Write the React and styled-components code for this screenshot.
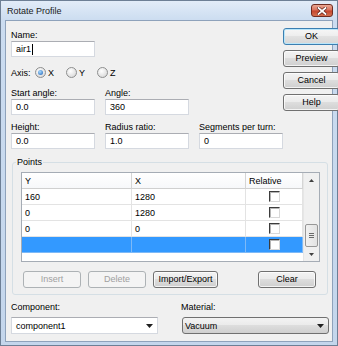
import React from "react";
import styled, { createGlobalStyle, css } from "styled-components";

const GlobalStyle = createGlobalStyle`
  html, body { margin: 0; padding: 0; background: #ffffff; }
  body {
    font-family: "Liberation Sans", Arial, sans-serif;
    font-size: 9px;
    color: #000;
  }
  * { box-sizing: border-box; }
`;

const Window = styled.div`
  width: 338px;
  height: 346px;
  border: 1px solid #6d7f95;
  background: linear-gradient(#e2ecf8, #cbdcf0 20px, #c4d6ec);
  padding: 0 4px 3px 4px;
  display: flex;
  flex-direction: column;
`;

const TitleBar = styled.div`
  height: 19px;
  display: flex;
  align-items: center;
  justify-content: space-between;
  padding-left: 2px;
`;

const Title = styled.div`
  font-size: 9px;
  color: #1a1a1a;
`;

const CloseButton = styled.div`
  width: 22px;
  height: 13px;
  border: 1px solid #6f2b20;
  border-radius: 3px;
  background: linear-gradient(#eaa894, #d8705a 48%, #c4432c 52%, #d4704f);
  display: flex;
  align-items: center;
  justify-content: center;
`;

const Client = styled.div`
  flex: 1;
  background: #f0f0f0;
  border: 1px solid #8ea2bb;
  padding: 7px 7px 0 5px;
  display: flex;
  flex-direction: column;
`;

const TopArea = styled.div`
  display: flex;
  align-items: flex-start;
`;

const FormColumn = styled.div`
  flex: 1;
  padding-top: 2px;
  display: flex;
  flex-direction: column;
`;

const ActionColumn = styled.div`
  width: 57px;
  display: flex;
  flex-direction: column;
  gap: 5px;
`;

const PushButton = styled.button`
  height: 17px;
  width: ${({ $w }) => $w || 57}px;
  padding: 0;
  font: inherit;
  font-size: 9px;
  line-height: 15px;
  border-radius: 3px;
  border: 1px solid #707070;
  color: #000;
  background: linear-gradient(#f3f3f3, #ebebeb 45%, #dddddd 50%, #cfcfcf);
  box-shadow: inset 0 0 0 1px rgba(255, 255, 255, 0.75);
  ${({ $default }) =>
    $default &&
    css`
      border-color: #3c7fb1;
      box-shadow: inset 0 0 0 1px #b9e6fa;
      background: linear-gradient(#f6f6f6, #eeeeee 45%, #e2e2e2 50%, #d6d6d6);
    `}
  ${({ disabled }) =>
    disabled &&
    css`
      border-color: #adb2b5;
      background: #f4f4f4;
      color: #a0a0a0;
      box-shadow: none;
    `}
`;

const FieldLabel = styled.div`
  height: 11px;
  line-height: 11px;
  white-space: nowrap;
`;

const TextBox = styled.div`
  width: ${({ $w }) => $w || 84}px;
  height: 16px;
  border: 1px solid #d5d9e0;
  border-top-color: #abadb3;
  background: #fff;
  padding-left: 4px;
  display: flex;
  align-items: center;
  white-space: nowrap;
`;

const Caret = styled.span`
  display: inline-block;
  width: 1px;
  height: 11px;
  background: #000;
  margin-left: 1px;
`;

const AxisRow = styled.div`
  margin-top: 8px;
  height: 15px;
  display: flex;
  align-items: center;
`;

const AxisLabel = styled.div`
  width: 24px;
`;

const RadioOption = styled.label`
  width: 31px;
  display: flex;
  align-items: center;
  gap: 2px;
`;

const RadioDot = styled.span`
  width: 11px;
  height: 11px;
  border-radius: 50%;
  border: 1px solid #8e8f8f;
  background: radial-gradient(circle at 40% 35%, #ffffff, #d8d8d8 85%);
  display: inline-flex;
  align-items: center;
  justify-content: center;
  &::after {
    content: "";
    width: 5px;
    height: 5px;
    border-radius: 50%;
    background: radial-gradient(circle at 40% 35%, #a8dcff, #1d5eb4);
    display: ${({ $checked }) => ($checked ? "block" : "none")};
  }
`;

const FieldGrid = styled.div`
  margin-top: 8px;
  display: grid;
  grid-template-columns: 84px 84px 84px;
  column-gap: 10px;
  row-gap: 7px;
`;

const Field = styled.div`
  display: flex;
  flex-direction: column;
`;

const PointsGroup = styled.fieldset`
  margin: 8px -3px 0 1px;
  padding: 4px 7px 6px 8px;
  border: 1px solid #d5dfe5;
  border-radius: 3px;
  min-width: 0;
`;

const GroupLegend = styled.legend`
  padding: 0 1px;
  margin-left: -5px;
  line-height: 11px;
`;

const DataGrid = styled.div`
  height: 90px;
  border: 1px solid #a5acb5;
  background: #fff;
  display: flex;
`;

const TableArea = styled.div`
  width: 281px;
  display: flex;
  flex-direction: column;
`;

const GridRow = styled.div`
  display: grid;
  grid-template-columns: 110px 114px 57px;
  height: 16px;
  background: ${({ $selected }) => ($selected ? "#3399ff" : "#fff")};
`;

const Cell = styled.div`
  border-right: 1px solid ${({ $selected }) => ($selected ? "#7db9f7" : "#e3e3e3")};
  border-bottom: 1px solid ${({ $selected }) => ($selected ? "#7db9f7" : "#e3e3e3")};
  padding-left: 3px;
  display: flex;
  align-items: center;
  justify-content: ${({ $center }) => ($center ? "center" : "flex-start")};
  ${({ $center }) => $center && "padding-left: 0;"}
`;

const HeaderCell = styled.div`
  border-right: 1px solid #d5d5d5;
  border-bottom: 1px solid #d0d0d0;
  background: linear-gradient(#ffffff, #f7f8fa);
  padding-left: 3px;
  display: flex;
  align-items: center;
`;

const CheckBox = styled.span`
  width: 11px;
  height: 11px;
  background: #fff;
  border-style: solid;
  border-width: 1px;
  border-color: #3c3c3c #d8d8d8 #d8d8d8 #3c3c3c;
  box-shadow: inset 1px 1px 0 #b5b5b5;
`;

const ScrollBar = styled.div`
  width: 16px;
  background: #f0f0f0;
  border-left: 1px solid #e6e6e6;
  display: flex;
  flex-direction: column;
`;

const ScrollArrow = styled.div`
  height: ${({ $h }) => $h}px;
  display: flex;
  align-items: center;
  justify-content: center;
`;

const ScrollTrack = styled.div`
  flex: 1;
  display: flex;
  flex-direction: column;
  justify-content: flex-end;
  align-items: center;
`;

const ScrollThumb = styled.div`
  width: 13px;
  height: 23px;
  border: 1px solid #979797;
  border-radius: 2px;
  background: linear-gradient(90deg, #f1f1f1, #e3e3e3);
  display: flex;
  flex-direction: column;
  align-items: center;
  justify-content: center;
  gap: 1px;
`;

const GripLine = styled.span`
  width: 5px;
  height: 1px;
  background: #6a6a6a;
`;

const ButtonRow = styled.div`
  margin-top: 9px;
  padding-left: 2px;
  display: flex;
  gap: 7px;
`;

const ClearSlot = styled.div`
  margin-left: auto;
  margin-right: 4px;
`;

const BottomRow = styled.div`
  margin: 7px -4px 0 0;
  display: grid;
  grid-template-columns: 147px 147px;
  column-gap: 24px;
`;

const ComboLabel = styled.div`
  height: 11px;
  line-height: 11px;
  margin-bottom: 4px;
  margin-left: ${({ $shift }) => $shift || 0}px;
`;

const Combo = styled.div`
  height: 17px;
  display: flex;
  align-items: center;
  justify-content: space-between;
  padding: 0 4px 0 4px;
  ${({ $button }) =>
    $button
      ? css`
          border: 1px solid #707070;
          border-radius: 3px;
          padding-left: 2px;
          background: linear-gradient(#f3f3f3, #ebebeb 45%, #dddddd 50%, #cfcfcf);
        `
      : css`
          border: 1px solid #d5d9e0;
          border-top-color: #abadb3;
          background: #fff;
        `}
`;

const Arrow = ({ up }) => (
  <svg width="7" height="4" viewBox="0 0 7 4">
    <path d={up ? "M0 4 L3.5 0 L7 4 Z" : "M0 0 L7 0 L3.5 4 Z"} fill="#202020" />
  </svg>
);

const SmallArrow = ({ up }) => (
  <svg width="5" height="3" viewBox="0 0 5 3">
    <path d={up ? "M0 3 L2.5 0 L5 3 Z" : "M0 0 L5 0 L2.5 3 Z"} fill="#404040" />
  </svg>
);

const CloseGlyph = () => (
  <svg width="10" height="8" viewBox="0 0 10 8">
    <path d="M1.5 1 L8.5 7 M8.5 1 L1.5 7" stroke="#5a1e16" strokeWidth="3.2" strokeLinecap="square" />
    <path d="M1.5 1 L8.5 7 M8.5 1 L1.5 7" stroke="#ffffff" strokeWidth="1.8" strokeLinecap="square" />
  </svg>
);

const points = [
  { y: "160", x: "1280" },
  { y: "0", x: "1280" },
  { y: "0", x: "0" },
  { y: "", x: "", selected: true },
];

export default function App() {
  return (
    <>
      <GlobalStyle />
      <Window>
        <TitleBar>
          <Title>Rotate Profile</Title>
          <CloseButton>
            <CloseGlyph />
          </CloseButton>
        </TitleBar>
        <Client>
          <TopArea>
            <FormColumn>
              <FieldLabel>Name:</FieldLabel>
              <TextBox>
                air1
                <Caret />
              </TextBox>
              <AxisRow>
                <AxisLabel>Axis:</AxisLabel>
                <RadioOption>
                  <RadioDot $checked />X
                </RadioOption>
                <RadioOption>
                  <RadioDot />Y
                </RadioOption>
                <RadioOption>
                  <RadioDot />Z
                </RadioOption>
              </AxisRow>
              <FieldGrid>
                <Field>
                  <FieldLabel>Start angle:</FieldLabel>
                  <TextBox>0.0</TextBox>
                </Field>
                <Field>
                  <FieldLabel>Angle:</FieldLabel>
                  <TextBox>360</TextBox>
                </Field>
                <div />
                <Field>
                  <FieldLabel>Height:</FieldLabel>
                  <TextBox>0.0</TextBox>
                </Field>
                <Field>
                  <FieldLabel>Radius ratio:</FieldLabel>
                  <TextBox>1.0</TextBox>
                </Field>
                <Field>
                  <FieldLabel>Segments per turn:</FieldLabel>
                  <TextBox>0</TextBox>
                </Field>
              </FieldGrid>
            </FormColumn>
            <ActionColumn>
              <PushButton $default>OK</PushButton>
              <PushButton>Preview</PushButton>
              <PushButton>Cancel</PushButton>
              <PushButton>Help</PushButton>
            </ActionColumn>
          </TopArea>

          <PointsGroup>
            <GroupLegend>Points</GroupLegend>
            <DataGrid>
              <TableArea>
                <GridRow>
                  <HeaderCell>Y</HeaderCell>
                  <HeaderCell>X</HeaderCell>
                  <HeaderCell>Relative</HeaderCell>
                </GridRow>
                {points.map((p, i) => (
                  <GridRow key={i} $selected={p.selected}>
                    <Cell $selected={p.selected}>{p.y}</Cell>
                    <Cell $selected={p.selected}>{p.x}</Cell>
                    <Cell $selected={p.selected} $center>
                      <CheckBox />
                    </Cell>
                  </GridRow>
                ))}
              </TableArea>
              <ScrollBar>
                <ScrollArrow $h={15}>
                  <SmallArrow up />
                </ScrollArrow>
                <ScrollTrack>
                  <ScrollThumb>
                    <GripLine />
                    <GripLine />
                    <GripLine />
                  </ScrollThumb>
                </ScrollTrack>
                <ScrollArrow $h={14}>
                  <SmallArrow />
                </ScrollArrow>
              </ScrollBar>
            </DataGrid>
            <ButtonRow>
              <PushButton disabled $w={58}>Insert</PushButton>
              <PushButton disabled $w={58}>Delete</PushButton>
              <PushButton $w={65}>Import/Export</PushButton>
              <ClearSlot>
                <PushButton $w={58}>Clear</PushButton>
              </ClearSlot>
            </ButtonRow>
          </PointsGroup>

          <BottomRow>
            <div>
              <ComboLabel>Component:</ComboLabel>
              <Combo>
                component1
                <Arrow />
              </Combo>
            </div>
            <div>
              <ComboLabel $shift={-1}>Material:</ComboLabel>
              <Combo $button>
                Vacuum
                <Arrow />
              </Combo>
            </div>
          </BottomRow>
        </Client>
      </Window>
    </>
  );
}
